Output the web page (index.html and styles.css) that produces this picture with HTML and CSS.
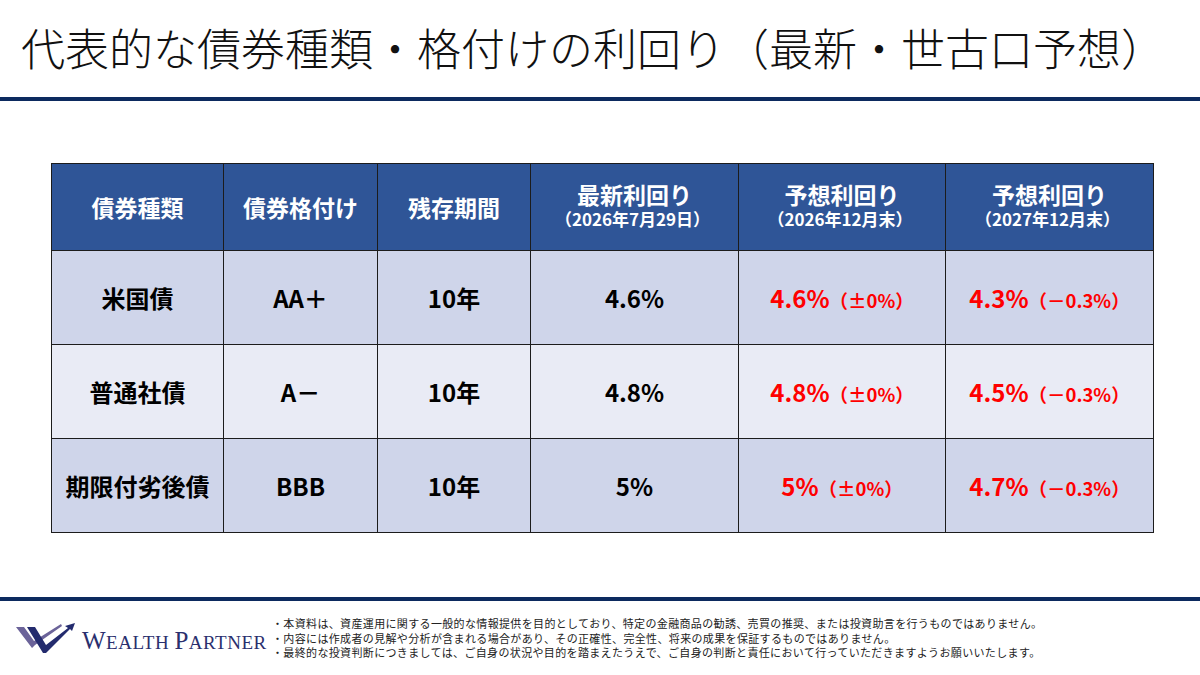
FILE: index.html
```html
<!DOCTYPE html>
<html lang="ja">
<head>
<meta charset="utf-8">
<link rel="stylesheet" href="styles.css">
</head>
<body>
<div class="page">
  <header class="head">
    <h1 class="title">代表的な債券種類・格付けの利回り（最新・世古口予想）</h1>
  </header>
  <div class="rule"></div>
  <main class="main">
    <table class="bonds">
      <colgroup>
        <col style="width:172px"><col style="width:154px"><col style="width:153px"><col style="width:208px"><col style="width:207px"><col style="width:208px">
      </colgroup>
      <thead>
        <tr>
          <th>債券種類</th>
          <th>債券格付け</th>
          <th>残存期間</th>
          <th><span class="main-h">最新利回り</span><span class="sub">（2026年7月29日）</span></th>
          <th><span class="main-h">予想利回り</span><span class="sub">（2026年12月末）</span></th>
          <th><span class="main-h">予想利回り</span><span class="sub">（2027年12月末）</span></th>
        </tr>
      </thead>
      <tbody>
        <tr class="odd">
          <td>米国債</td><td>AA＋</td><td>10年</td><td>4.6%</td>
          <td class="red">4.6%<span class="chg">（±0%）</span></td>
          <td class="red">4.3%<span class="chg">（－0.3%）</span></td>
        </tr>
        <tr class="even">
          <td>普通社債</td><td>A－</td><td>10年</td><td>4.8%</td>
          <td class="red">4.8%<span class="chg">（±0%）</span></td>
          <td class="red">4.5%<span class="chg">（－0.3%）</span></td>
        </tr>
        <tr class="odd">
          <td>期限付劣後債</td><td>BBB</td><td>10年</td><td>5%</td>
          <td class="red">5%<span class="chg">（±0%）</span></td>
          <td class="red">4.7%<span class="chg">（－0.3%）</span></td>
        </tr>
      </tbody>
    </table>
  </main>
  <div class="rule"></div>
  <footer class="foot">
    <div class="logo">
      <svg class="mark" width="64" height="34" viewBox="0 0 64 34">
        <polygon points="1,6 9,6 19,20 46,3 47,5 20,24 17,27" fill="#6b6399"/>
        <polygon points="12,6 20,6 31,24 53,7 50,5 60,2 57,10 55,8 31,32 28,32" fill="#232b6e"/>
      </svg>
      <span class="brand"><span class="cap">W</span>EALTH <span class="cap">P</span>ARTNER</span>
    </div>
    <div class="notes">
      <p>・本資料は、資産運用に関する一般的な情報提供を目的としており、特定の金融商品の勧誘、売買の推奨、または投資助言を行うものではありません。</p>
      <p>・内容には作成者の見解や分析が含まれる場合があり、その正確性、完全性、将来の成果を保証するものではありません。</p>
      <p>・最終的な投資判断につきましては、ご自身の状況や目的を踏まえたうえで、ご自身の判断と責任において行っていただきますようお願いいたします。</p>
    </div>
  </footer>
</div>
</body>
</html>
```
FILE: styles.css
```css
html, body {
  margin: 0;
  padding: 0;
  background: #ffffff;
}
.page {
  width: 1200px;
  height: 675px;
  overflow: hidden;
  font-family: "Noto Sans CJK JP", "Noto Sans", sans-serif;
  color: #000;
}
.head {
  height: 97px;
  display: flex;
  align-items: center;
  padding-left: 21px;
}
.title {
  margin: 0;
  font-size: 44px;
  font-weight: 200;
  line-height: 1;
  letter-spacing: 0;
  color: #111;
  padding-bottom: 4px;
}
.rule {
  height: 4px;
  background: #0c2a5f;
}
.main {
  padding: 62px 0 0 51px;
  height: 496px;
  box-sizing: border-box;
}
.bonds {
  border-collapse: collapse;
  table-layout: fixed;
  width: 1102px;
}
.bonds th, .bonds td {
  border: 1.5px solid #1c1c1c;
  text-align: center;
  vertical-align: middle;
  padding: 0;
  font-weight: 700;
}
.bonds th {
  background: #2f5597;
  color: #fff;
  height: 86px;
  font-size: 23px;
  line-height: 28px;
}
.bonds th .main-h {
  display: block;
  line-height: 26px;
  margin-top: -3px;
}
.bonds th .sub {
  display: block;
  font-size: 17px;
  line-height: 24px;
  margin-left: -4px;
}
.bonds td {
  height: 93px;
  font-size: 24px;
}
.odd td { background: #cfd5ea; }
.even td { background: #e9ebf5; }
.bonds td.red { color: #ff0000; }
.chg {
  font-size: 18.5px;
  font-weight: 700;
}
.foot {
  display: flex;
  align-items: center;
  height: 74px;
  padding-bottom: 2px;
  box-sizing: border-box;
}
.logo {
  display: flex;
  align-items: center;
  width: 272px;
  padding-left: 15px;
  box-sizing: border-box;
  flex-shrink: 0;
}
.mark {
  display: block;
  margin-top: 2px;
}
.brand {
  font-family: "Liberation Serif", serif;
  color: #2a2f6e;
  font-size: 19px;
  letter-spacing: 0.5px;
  margin-left: 3px;
  margin-top: 8px;
  white-space: nowrap;
}
.brand .cap { font-size: 25px; }
.notes {
  font-size: 11px;
  line-height: 14.5px;
  color: #222;
  letter-spacing: 0.35px;
  padding-top: 2px;
}
.notes p { margin: 0; white-space: nowrap; }
```
